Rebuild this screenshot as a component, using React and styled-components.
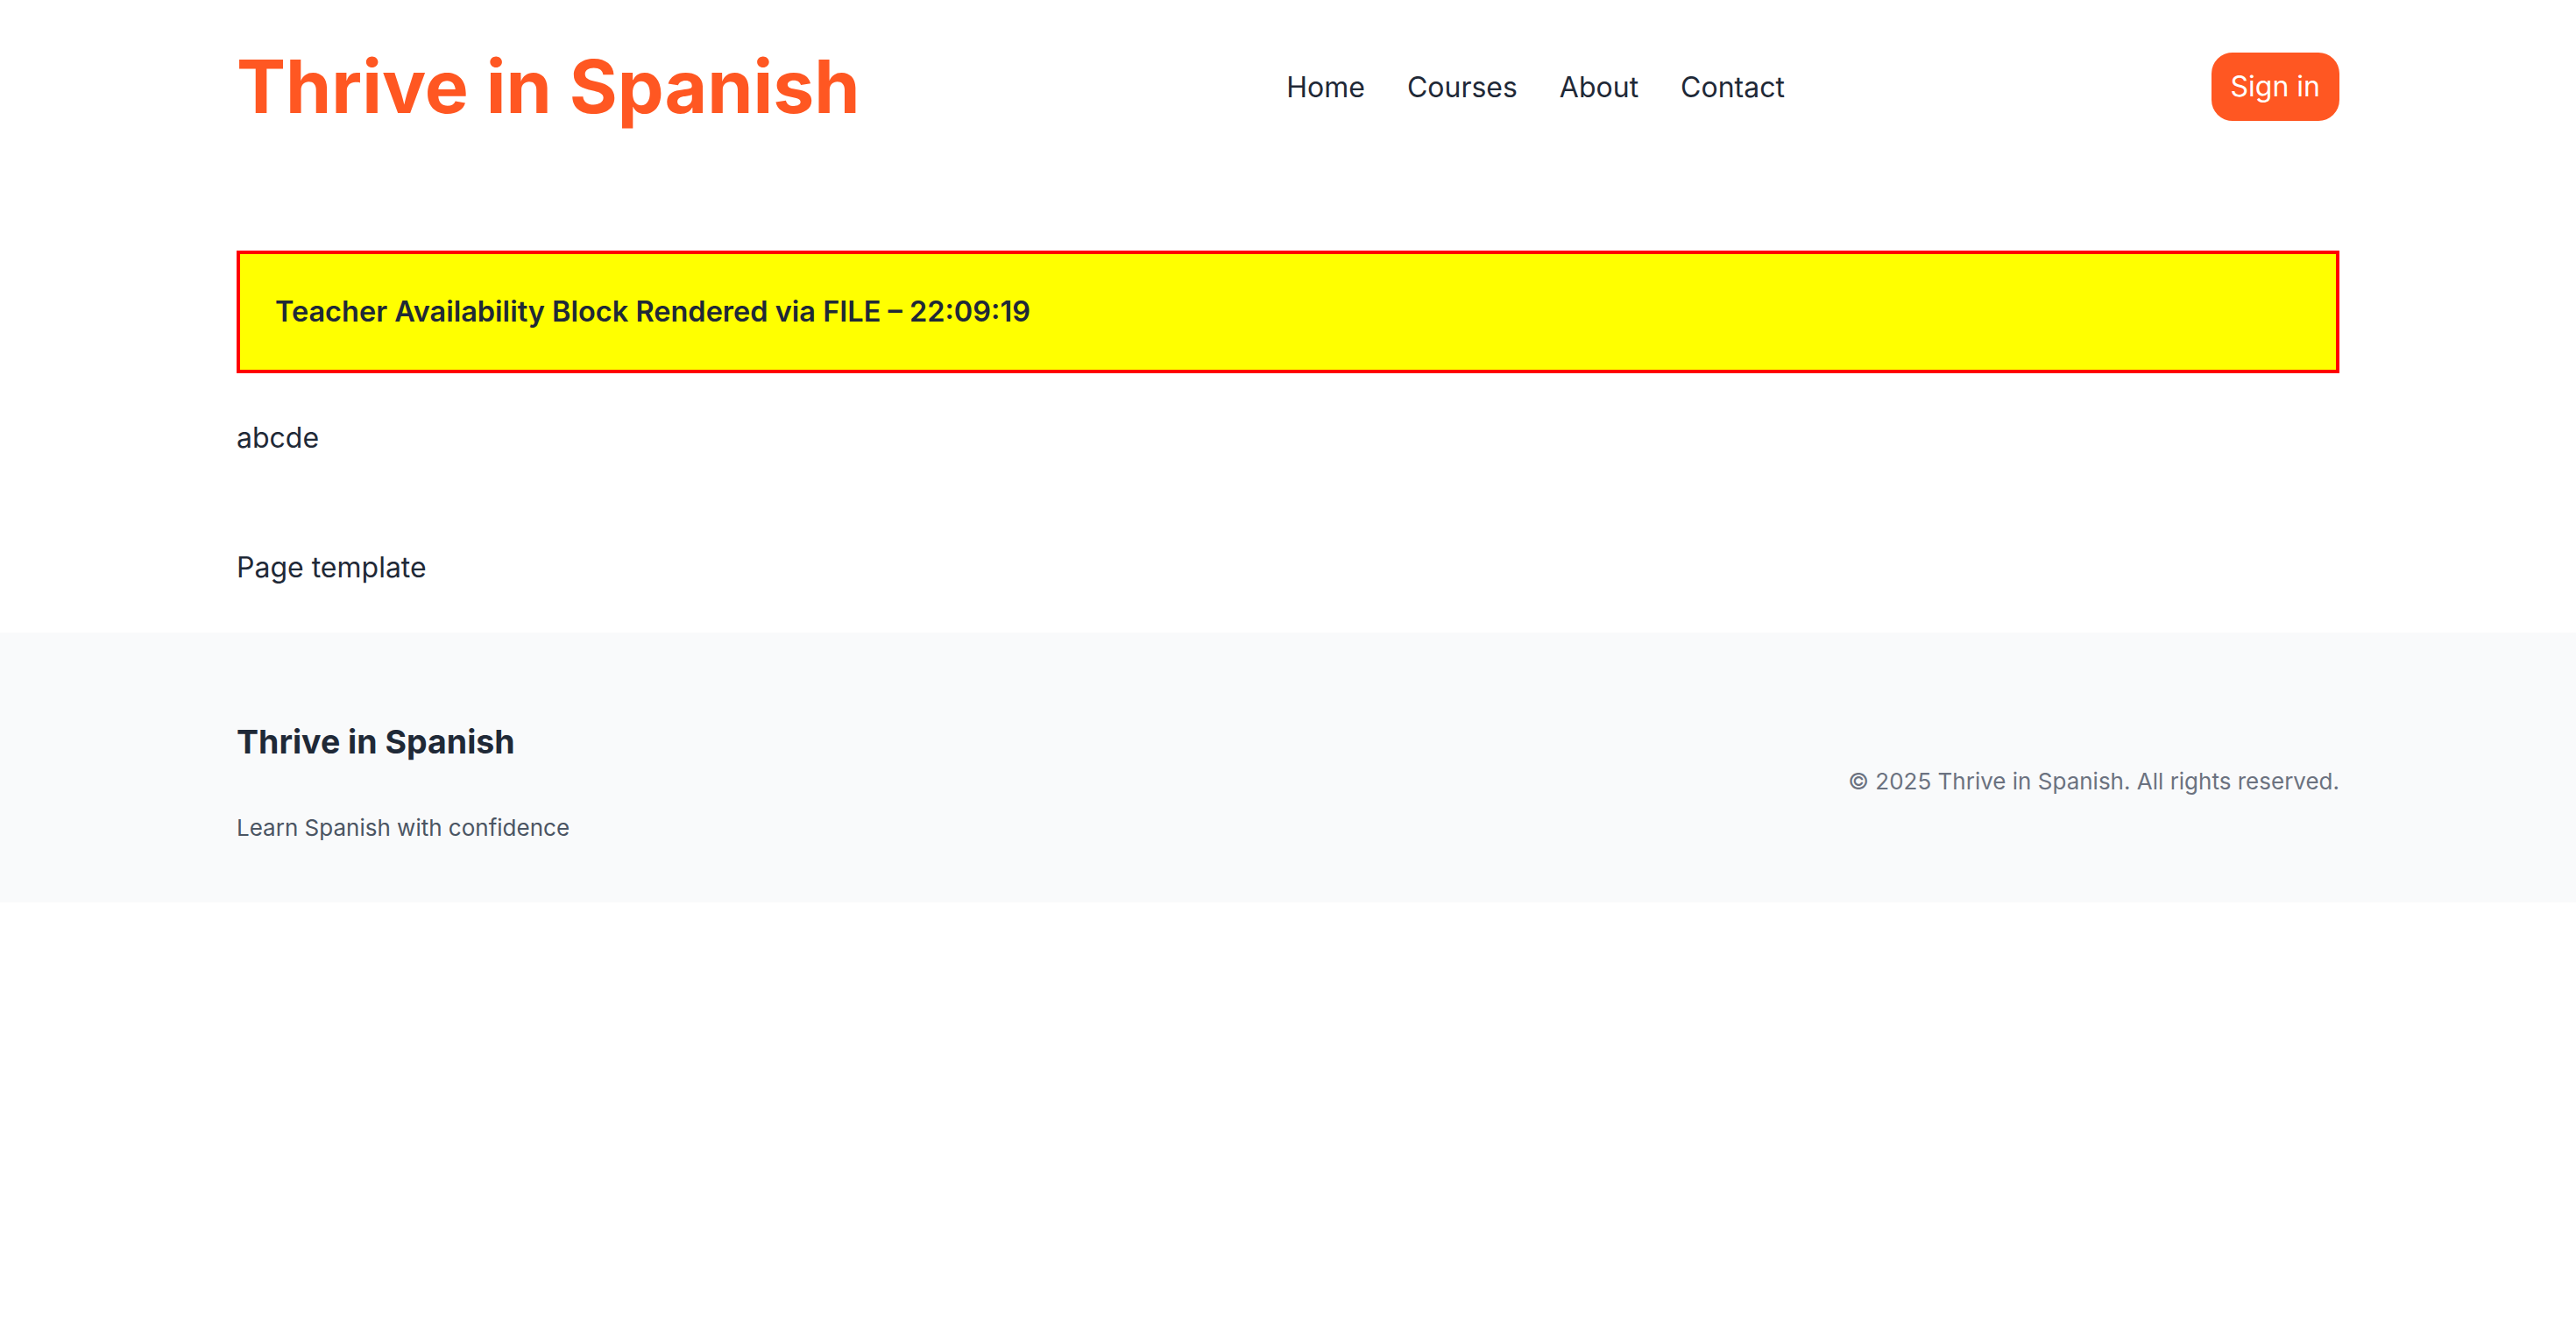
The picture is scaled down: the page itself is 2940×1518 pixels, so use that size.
import React from 'react';
import styled, { createGlobalStyle } from 'styled-components';

const GlobalStyle = createGlobalStyle`
  * {
    box-sizing: border-box;
  }

  body {
    margin: 0;
    background: #ffffff;
    font-family: Inter, 'Noto Sans', 'Liberation Sans', sans-serif;
    color: #1f2937;
  }
`;

const Container = styled.div`
  max-width: 2400px;
  margin: 0 auto;
`;

const HeaderBar = styled.header`
  padding: 48px 0;
`;

const HeaderInner = styled(Container)`
  display: flex;
  align-items: center;
  justify-content: space-between;
`;

const Logo = styled.a`
  font-size: 84px;
  line-height: 102px;
  font-weight: 700;
  color: #ff5722;
  text-decoration: none;
`;

const Nav = styled.nav`
  display: flex;
  align-items: center;
  gap: 48px;
  padding-top: 2px;
`;

const NavLink = styled.a`
  font-size: 32px;
  line-height: 48px;
  color: #1f2937;
  text-decoration: none;
`;

const SignInButton = styled.button`
  font-family: inherit;
  font-size: 32px;
  line-height: 46px;
  padding: 16px 22px;
  border: none;
  border-radius: 24px;
  background: #ff5722;
  color: #ffffff;
  cursor: pointer;
`;

const Main = styled(Container)`
  padding: 88px 0 50px;
`;

const DebugBlock = styled.div`
  border: 4px solid #ff0000;
  background: #ffff00;
  padding: 40px;
  font-size: 32.5px;
  line-height: 52px;
  font-weight: 600;
  color: #1f2937;
`;

const Paragraph = styled.p`
  margin: ${props => props.$top || 0}px 0 0;
  font-size: 32px;
  line-height: 48px;
  color: #1f2937;
`;

const FooterBar = styled.footer`
  background: #f9fafb;
  padding: 97px 0 65px;
`;

const FooterInner = styled(Container)`
  display: flex;
  align-items: center;
  justify-content: space-between;
`;

const FooterBrand = styled.div`
  display: flex;
  flex-direction: column;
  gap: 50px;
`;

const FooterTitle = styled.h3`
  margin: 0;
  font-size: 37.5px;
  line-height: 56px;
  font-weight: 700;
  color: #1f2937;
`;

const FooterText = styled.p`
  margin: 0;
  font-size: 26px;
  line-height: 40px;
  color: ${props => (props.$muted ? '#6b7280' : '#4b5563')};
`;

export default function App() {
  return (
    <>
      <GlobalStyle />
      <HeaderBar>
        <HeaderInner>
          <Logo href="#">Thrive in Spanish</Logo>
          <Nav>
            <NavLink href="#">Home</NavLink>
            <NavLink href="#">Courses</NavLink>
            <NavLink href="#">About</NavLink>
            <NavLink href="#">Contact</NavLink>
          </Nav>
          <SignInButton>Sign in</SignInButton>
        </HeaderInner>
      </HeaderBar>

      <Main>
        <DebugBlock>Teacher Availability Block Rendered via FILE – 22:09:19</DebugBlock>
        <Paragraph $top={50}>abcde</Paragraph>
        <Paragraph $top={100}>Page template</Paragraph>
      </Main>

      <FooterBar>
        <FooterInner>
          <FooterBrand>
            <FooterTitle>Thrive in Spanish</FooterTitle>
            <FooterText>Learn Spanish with confidence</FooterText>
          </FooterBrand>
          <FooterText $muted>© 2025 Thrive in Spanish. All rights reserved.</FooterText>
        </FooterInner>
      </FooterBar>
    </>
  );
}
